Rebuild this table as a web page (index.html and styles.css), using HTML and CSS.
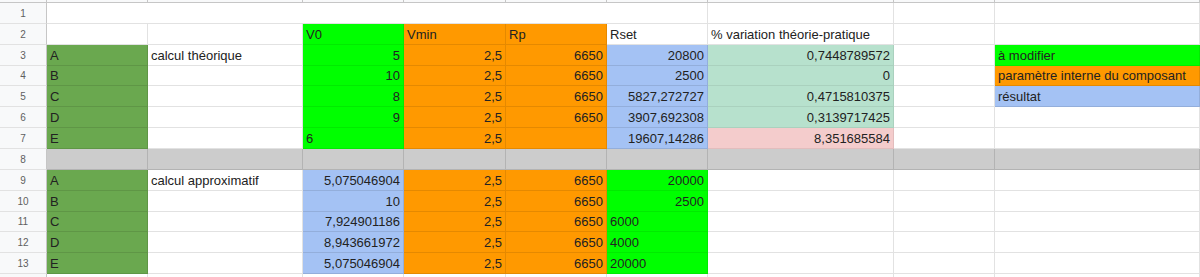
FILE: index.html
```html
<!DOCTYPE html>
<html lang="fr">
<head>
<meta charset="utf-8">
<title>Feuille de calcul</title>
<link rel="stylesheet" href="styles.css">
</head>
<body>
<div class="sheet">
  <div class="strip rhs"></div><div class="strip"></div><div class="strip"></div><div class="strip"></div><div class="strip"></div><div class="strip"></div><div class="strip"></div><div class="strip"></div><div class="strip"></div><div class="strip"></div>

  <div class="rh">1</div><div class="cell span6"></div><div class="cell"></div><div class="cell"></div><div class="cell"></div>

  <div class="rh">2</div><div class="cell"></div><div class="cell"></div><div class="cell g">V0</div><div class="cell o">Vmin</div><div class="cell o">Rp</div><div class="cell">Rset</div><div class="cell">% variation théorie-pratique</div><div class="cell"></div><div class="cell"></div>

  <div class="rh">3</div><div class="cell dg">A</div><div class="cell">calcul théorique</div><div class="cell g num">5</div><div class="cell o num">2,5</div><div class="cell o num">6650</div><div class="cell b num">20800</div><div class="cell lg num">0,7448789572</div><div class="cell"></div><div class="cell g">à modifier</div>

  <div class="rh">4</div><div class="cell dg">B</div><div class="cell"></div><div class="cell g num">10</div><div class="cell o num">2,5</div><div class="cell o num">6650</div><div class="cell b num">2500</div><div class="cell lg num">0</div><div class="cell"></div><div class="cell o">paramètre interne du composant</div>

  <div class="rh">5</div><div class="cell dg">C</div><div class="cell"></div><div class="cell g num">8</div><div class="cell o num">2,5</div><div class="cell o num">6650</div><div class="cell b num">5827,272727</div><div class="cell lg num">0,4715810375</div><div class="cell"></div><div class="cell b">résultat</div>

  <div class="rh">6</div><div class="cell dg">D</div><div class="cell"></div><div class="cell g num">9</div><div class="cell o num">2,5</div><div class="cell o num">6650</div><div class="cell b num">3907,692308</div><div class="cell lg num">0,3139717425</div><div class="cell"></div><div class="cell"></div>

  <div class="rh">7</div><div class="cell dg">E</div><div class="cell"></div><div class="cell g">6</div><div class="cell o num">2,5</div><div class="cell o"></div><div class="cell b num">19607,14286</div><div class="cell p num">8,351685584</div><div class="cell"></div><div class="cell"></div>

  <div class="rh">8</div><div class="cell gr"></div><div class="cell gr"></div><div class="cell gr"></div><div class="cell gr"></div><div class="cell gr"></div><div class="cell gr"></div><div class="cell gr"></div><div class="cell gr"></div><div class="cell gr"></div>

  <div class="rh">9</div><div class="cell dg">A</div><div class="cell">calcul approximatif</div><div class="cell b num">5,075046904</div><div class="cell o num">2,5</div><div class="cell o num">6650</div><div class="cell g num">20000</div><div class="cell"></div><div class="cell"></div><div class="cell"></div>

  <div class="rh">10</div><div class="cell dg">B</div><div class="cell"></div><div class="cell b num">10</div><div class="cell o num">2,5</div><div class="cell o num">6650</div><div class="cell g num">2500</div><div class="cell"></div><div class="cell"></div><div class="cell"></div>

  <div class="rh">11</div><div class="cell dg">C</div><div class="cell"></div><div class="cell b num">7,924901186</div><div class="cell o num">2,5</div><div class="cell o num">6650</div><div class="cell g">6000</div><div class="cell"></div><div class="cell"></div><div class="cell"></div>

  <div class="rh">12</div><div class="cell dg">D</div><div class="cell"></div><div class="cell b num">8,943661972</div><div class="cell o num">2,5</div><div class="cell o num">6650</div><div class="cell g">4000</div><div class="cell"></div><div class="cell"></div><div class="cell"></div>

  <div class="rh">13</div><div class="cell dg">E</div><div class="cell"></div><div class="cell b num">5,075046904</div><div class="cell o num">2,5</div><div class="cell o num">6650</div><div class="cell g">20000</div><div class="cell"></div><div class="cell"></div><div class="cell"></div>

  <div class="rh"></div><div class="cell"></div><div class="cell"></div><div class="cell"></div><div class="cell"></div><div class="cell"></div><div class="cell"></div><div class="cell"></div><div class="cell"></div><div class="cell"></div>
</div>
</body>
</html>
```
FILE: styles.css
```css
html, body {
  margin: 0;
  padding: 0;
  background: #ffffff;
  overflow: hidden;
}

.sheet {
  display: grid;
  width: 1200px;
  grid-template-columns: 47px 101px 155px 101px 102px 101px 101px 186px 101px 205px;
  grid-template-rows: 3px 21px 21px 21px 20px 21px 21px 21px 21px 21px 21px 20px 21px 21px 21px;
  font-family: "Liberation Sans", Arial, sans-serif;
  font-size: 13px;
  color: #222222;
}

.strip {
  box-sizing: border-box;
  background: #f8f9fa;
  border-right: 1px solid #c6c6c6;
  border-bottom: 1px solid #c6c6c6;
}

.rhs {
  border-right: 1px solid #c6c6c6;
}

.rh {
  box-sizing: border-box;
  background: #f8f9fa;
  border-right: 1px solid #c6c6c6;
  border-bottom: 1px solid #e2e2e2;
  display: flex;
  align-items: center;
  justify-content: center;
  font-size: 10px;
  color: #5f5f5f;
}

.cell {
  box-sizing: border-box;
  border-right: 1px solid #e2e2e2;
  border-bottom: 1px solid #e2e2e2;
  display: flex;
  align-items: flex-end;
  padding: 0 3px 1px 3px;
  line-height: 16px;
  white-space: nowrap;
  overflow: hidden;
}

.span6 {
  grid-column: span 6;
}

.num {
  justify-content: flex-end;
}

.g  { background: #00ff00; border-color: rgba(0, 0, 0, 0.08); }
.dg { background: #6aa84f; border-color: rgba(0, 0, 0, 0.1); }
.o  { background: #ff9900; border-color: rgba(0, 0, 0, 0.1); }
.b  { background: #a4c2f4; border-color: rgba(0, 0, 0, 0.1); }
.lg { background: #b7e1cd; border-color: rgba(0, 0, 0, 0.07); }
.p  { background: #f4cccc; border-color: rgba(0, 0, 0, 0.07); }
.gr { background: #cccccc; border-color: rgba(0, 0, 0, 0.12); }
```
